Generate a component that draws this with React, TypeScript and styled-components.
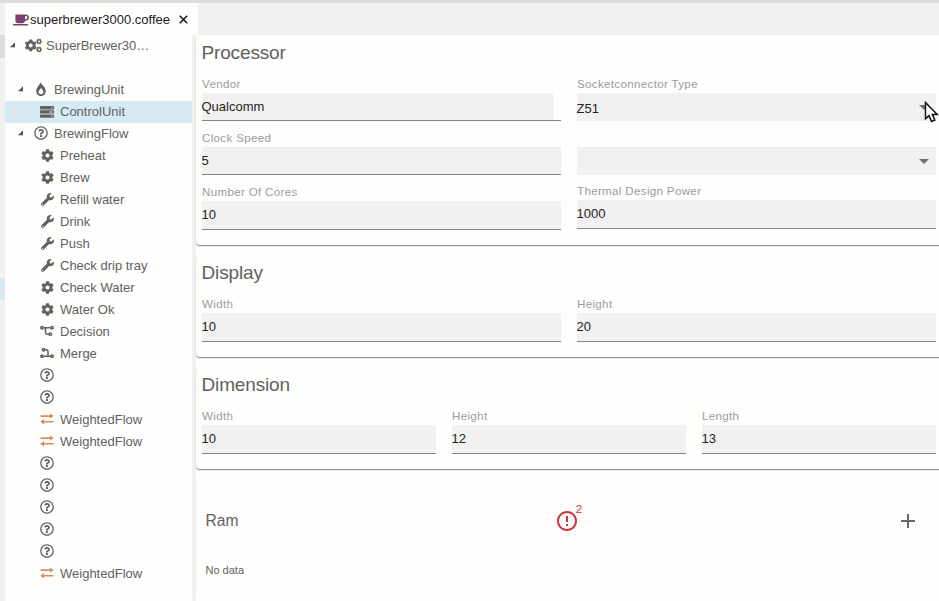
import React from "react";
import styled, { createGlobalStyle } from "styled-components";
import { FaCoffee, FaCogs, FaCog, FaWrench, FaRegQuestionCircle } from "react-icons/fa";
import { MdAdd, MdArrowDropDown, MdErrorOutline } from "react-icons/md";

const paper = "#fefefd";
const chrome = "#f1f1f0";
const ink = "#616161";

const GlobalStyle = createGlobalStyle`
  * { box-sizing: border-box; }
  body { margin: 0; background: ${paper}; overflow: hidden; }
  body, input { font-family: "Liberation Sans", Arial, sans-serif; }
`;

const Window = styled.div`
  position: relative;
  display: flex;
  flex-direction: column;
  width: 939px;
  height: 601px;
  overflow: hidden;
  background: ${paper};
  border-top: 3px solid #dcdcdc;
`;

const TabBar = styled.header`
  display: flex;
  flex: 0 0 32px;
  padding-left: 5px;
  background: ${chrome};
`;

const Tab = styled.div`
  display: flex;
  align-items: center;
  width: 193px;
  padding: 1px 8px 0 8px;
  background: ${paper};
  color: #1c1c1c;
  font-size: 13px;
  svg { flex: none; }
`;

const TabTitle = styled.span`
  margin: 0 9px 0 1px;
  white-space: nowrap;
`;

const Workspace = styled.div`
  display: flex;
  flex: 1;
  min-height: 0;
`;

const SideStrip = styled.div`
  width: 5px;
  background: ${chrome};
`;

const StripMark = styled.div<{ $top: number; $height: number; $color: string }>`
  height: ${(p) => p.$height}px;
  margin-top: ${(p) => p.$top}px;
  background: ${(p) => p.$color};
`;

const Tree = styled.nav`
  width: 187px;
  background: ${paper};
`;

const TreeRow = styled.div<{ $depth: number; $selected?: boolean }>`
  display: flex;
  align-items: center;
  height: 22px;
  padding-bottom: 2px;
  padding-left: ${(p) => [5, 13, 34][p.$depth]}px;
  background: ${(p) => (p.$selected ? "#d8eaf4" : "transparent")};
  color: ${ink};
  font-size: 13px;
  white-space: nowrap;
`;

const RootRow = styled(TreeRow)`
  margin-bottom: 22px;
`;

const Toggle = styled.svg`
  width: 6px;
  height: 6px;
  margin-right: 9px;
  flex: none;
  fill: #555;
`;

const IconSlot = styled.span<{ $wide?: boolean }>`
  display: flex;
  align-items: center;
  justify-content: center;
  width: ${(p) => (p.$wide ? 17 : 16)}px;
  margin-right: ${(p) => (p.$wide ? 4 : 5)}px;
  flex: none;
`;

const Splitter = styled.div`
  width: 4px;
  background: ${chrome};
`;

const Form = styled.main`
  display: flex;
  flex: 1;
  flex-direction: column;
  gap: 9px;
  min-width: 0;
`;

const Card = styled.section<{ $height: number; $top?: number; $soft?: boolean }>`
  flex: 0 0 ${(p) => p.$height}px;
  margin-right: -6px;
  padding: ${(p) => p.$top ?? 7}px 9px 0 6px;
  border-radius: 4px;
  background: ${paper};
  box-shadow: ${(p) =>
    p.$soft
      ? "0 0 1px rgba(0,0,0,.2)"
      : "0 1px 1px rgba(0,0,0,.4), 0 0 1px rgba(0,0,0,.08), 0 2px 2px -1px rgba(0,0,0,.12)"};
`;

const CardTitle = styled.h2`
  margin: 0 0 15px -0.5px;
  color: ${ink};
  font-size: 19px;
  font-weight: 400;
  letter-spacing: -0.15px;
  line-height: 24px;
`;

const Columns = styled.div`
  display: flex;
  gap: 16px;
`;

const Column = styled.div`
  display: flex;
  flex: 1;
  flex-direction: column;
`;

const FieldBox = styled.label<{ $height?: number }>`
  display: flex;
  flex-direction: column;
  height: ${(p) => p.$height ?? 54}px;
`;

const FieldLabel = styled.span`
  height: 13px;
  color: #9c9c9c;
  font-size: 11.6px;
  letter-spacing: 0.32px;
  line-height: 7px;
  white-space: nowrap;
`;

const Control = styled.span<{ $height: number; $plain?: boolean; $inset?: boolean }>`
  display: flex;
  align-items: center;
  justify-content: space-between;
  height: ${(p) => p.$height}px;
  padding-bottom: ${(p) => (p.$height > 28 ? 2 : 0)}px;
  border-bottom: ${(p) => (p.$plain ? "0" : "1px solid #868686")};
  background: ${(p) =>
    p.$inset ? `linear-gradient(90deg, ${chrome} calc(100% - 8px), ${paper} calc(100% - 8px))` : chrome};
  color: #242424;
  font-size: 13px;
  svg { color: #707070; flex: none; }
`;

const Value = styled.span<{ $lowered?: boolean }>`
  margin-left: -0.5px;
  padding-top: ${(p) => (p.$lowered ? 2 : 0)}px;
`;

const ListHeader = styled.div`
  display: grid;
  grid-template-columns: 1fr 28px 1fr;
  align-items: center;
  height: 76px;
  padding: 0 10px 0 3.5px;
  color: ${ink};
  font-size: 15.6px;
`;

const ErrorBadge = styled.div`
  position: relative;
  display: flex;
  left: 3px;
  color: #cf3438;
`;

const ErrorCount = styled.span`
  position: absolute;
  left: 21px;
  top: -6px;
  font-size: 11.5px;
  line-height: 12px;
`;

const AddSlot = styled.div`
  display: flex;
  justify-content: flex-end;
  padding-right: 6px;
  color: #686868;
`;

const Empty = styled.p`
  margin: 4px 0 0 3.5px;
  color: ${ink};
  font-size: 11px;
  line-height: 14px;
`;

const Pointer = styled.svg`
  position: absolute;
  left: 924px;
  top: 98px;
`;

const FlameIcon = () => (
  <svg width="12" height="14" viewBox="0 0 12 14">
    <path
      fill="currentColor"
      fillRule="evenodd"
      d="M5.4 0C6.1 2.7 10.7 5 10.7 8.9 10.7 11.8 8.7 14 6 14S1.2 11.8 1.2 8.9C1.2 6.8 2.3 5.3 3.3 3.9 4.4 2.4 5.4 1.6 5.4 0ZM6 6C5.2 7.6 3.6 8.5 3.6 10.1 3.6 11.5 4.6 12.3 6 12.3S8.4 11.5 8.4 10.1C8.4 8.5 6.8 7.6 6 6Z"
    />
  </svg>
);

const ServerIcon = () => (
  <svg width="14" height="13" viewBox="0 0 14 13">
    <path
      fill="currentColor"
      fillRule="evenodd"
      d="M.7 1H13.3Q14 1 14 1.7V3.8Q14 4.5 13.3 4.5H.7Q0 4.5 0 3.8V1.7Q0 1 .7 1ZM11 2.2V3.2H12.5V2.2ZM.7 5.2H13.3Q14 5.2 14 5.9V7.9Q14 8.6 13.3 8.6H.7Q0 8.6 0 7.9V5.9Q0 5.2 .7 5.2ZM9.5 6.4V7.4H12.5V6.4ZM.7 9.4H13.3Q14 9.4 14 10.1V12.1Q14 12.8 13.3 12.8H.7Q0 12.8 0 12.1V10.1Q0 9.4 .7 9.4ZM11 10.6V11.6H12.5V10.6Z"
    />
  </svg>
);

const DecisionIcon = () => (
  <svg width="14" height="12" viewBox="0 0 14 12" fill="none" stroke="currentColor" strokeWidth="1.5">
    <circle cx="2" cy="2.8" r="1.2" />
    <circle cx="12" cy="2.8" r="1.2" />
    <circle cx="10.3" cy="9.3" r="1.3" />
    <path d="M3.2 2.8H10.8M5.5 2.8V7Q5.5 9.3 7.5 9.3H9" />
  </svg>
);

const MergeIcon = () => (
  <svg width="14" height="12" viewBox="0 0 14 12" fill="none" stroke="currentColor" strokeWidth="1.5">
    <circle cx="3.5" cy="2.8" r="1.2" />
    <circle cx="2" cy="9.2" r="1.2" />
    <circle cx="12" cy="9.2" r="1.2" />
    <path d="M3.2 9.2H10.8M4.7 2.8H6.2Q8 2.8 8 4.8V9" />
  </svg>
);

const FlowIcon = () => (
  <svg width="14" height="12" viewBox="0 0 14 12" fill="#d3905f">
    <path d="M0.5 2.3H10V0.4L13.7 3.1 10 5.8V4H0.5ZM13.5 7.9H4V6L0.3 8.7 4 11.4V9.6H13.5Z" />
  </svg>
);

const icons = {
  system: <FaCogs size={17} />,
  flame: <FlameIcon />,
  server: <ServerIcon />,
  help: <FaRegQuestionCircle size={14} />,
  cog: <FaCog size={13} />,
  wrench: <FaWrench size={13} />,
  decision: <DecisionIcon />,
  merge: <MergeIcon />,
  flow: <FlowIcon />,
};

type Node = { icon: keyof typeof icons; name?: string; depth: number; selected?: boolean };

const nodes: Node[] = [
  { icon: "flame", name: "BrewingUnit", depth: 1 },
  { icon: "server", name: "ControlUnit", depth: 2, selected: true },
  { icon: "help", name: "BrewingFlow", depth: 1 },
  { icon: "cog", name: "Preheat", depth: 2 },
  { icon: "cog", name: "Brew", depth: 2 },
  { icon: "wrench", name: "Refill water", depth: 2 },
  { icon: "wrench", name: "Drink", depth: 2 },
  { icon: "wrench", name: "Push", depth: 2 },
  { icon: "wrench", name: "Check drip tray", depth: 2 },
  { icon: "cog", name: "Check Water", depth: 2 },
  { icon: "cog", name: "Water Ok", depth: 2 },
  { icon: "decision", name: "Decision", depth: 2 },
  { icon: "merge", name: "Merge", depth: 2 },
  { icon: "help", depth: 2 },
  { icon: "help", depth: 2 },
  { icon: "flow", name: "WeightedFlow", depth: 2 },
  { icon: "flow", name: "WeightedFlow", depth: 2 },
  { icon: "help", depth: 2 },
  { icon: "help", depth: 2 },
  { icon: "help", depth: 2 },
  { icon: "help", depth: 2 },
  { icon: "help", depth: 2 },
  { icon: "flow", name: "WeightedFlow", depth: 2 },
];

const Expander = () => (
  <Toggle viewBox="0 0 6 6">
    <path d="M5 0.3V5.3H0Z" />
  </Toggle>
);

type FieldProps = {
  label?: string;
  value?: string;
  height?: number;
  control?: number;
  select?: boolean;
  inset?: boolean;
};

const Field = ({ label, value, height, control = 29, select, inset }: FieldProps) => (
  <FieldBox $height={height}>
    <FieldLabel>{label}</FieldLabel>
    <Control $height={control} $plain={select} $inset={inset}>
      <Value $lowered={select}>{value}</Value>
      {select && <MdArrowDropDown size={24} />}
    </Control>
  </FieldBox>
);

export default function App() {
  return (
    <>
      <GlobalStyle />
      <Window>
        <TabBar>
          <Tab>
            <FaCoffee size={16} color="#78416f" />
            <TabTitle>superbrewer3000.coffee</TabTitle>
            <svg width="9" height="9" viewBox="0 0 9 9" stroke="#111" strokeWidth="1.5">
              <path d="M0.8 0.8L8.2 8.2M8.2 0.8L0.8 8.2" />
            </svg>
          </Tab>
        </TabBar>
        <Workspace>
          <SideStrip>
            <StripMark $top={0} $height={23} $color="#dcdcdc" />
            <StripMark $top={220} $height={22} $color="#d8eaf4" />
          </SideStrip>
          <Tree>
            <RootRow $depth={0}>
              <Expander />
              <IconSlot $wide>{icons.system}</IconSlot>
              SuperBrewer30…
            </RootRow>
            {nodes.map((n, i) => (
              <TreeRow key={i} $depth={n.depth} $selected={n.selected}>
                {n.depth === 1 && <Expander />}
                <IconSlot>{icons[n.icon]}</IconSlot>
                {n.name}
              </TreeRow>
            ))}
          </Tree>
          <Splitter />
          <Form>
            <Card $height={210} $top={6}>
              <CardTitle>Processor</CardTitle>
              <Columns>
                <Column>
                  <Field label="Vendor" value="Qualcomm" control={28} inset />
                  <Field label="Clock Speed" value="5" control={28} />
                  <Field label="Number Of Cores" value="10" />
                </Column>
                <Column>
                  <Field label="Socketconnector Type" value="Z51" control={28} select />
                  <Field control={28} height={53} select />
                  <Field label="Thermal Design Power" value="1000" />
                </Column>
              </Columns>
            </Card>
            <Card $height={103}>
              <CardTitle>Display</CardTitle>
              <Columns>
                <Column><Field label="Width" value="10" /></Column>
                <Column><Field label="Height" value="20" /></Column>
              </Columns>
            </Card>
            <Card $height={103}>
              <CardTitle>Dimension</CardTitle>
              <Columns>
                <Column><Field label="Width" value="10" /></Column>
                <Column><Field label="Height" value="12" /></Column>
                <Column><Field label="Length" value="13" /></Column>
              </Columns>
            </Card>
            <Card $height={119} $top={5} $soft>
              <ListHeader>
                <span>Ram</span>
                <ErrorBadge>
                  <MdErrorOutline size={24} />
                  <ErrorCount>2</ErrorCount>
                </ErrorBadge>
                <AddSlot><MdAdd size={24} /></AddSlot>
              </ListHeader>
              <Empty>No data</Empty>
            </Card>
          </Form>
        </Workspace>
        <Pointer width="15" height="22" viewBox="0 0 15 22">
          <path
            d="M1.5 1.5V17.8L5 14.6 7.6 20.4 10.8 19 8.3 13.4H13.2Z"
            fill="#fff"
            stroke="#111"
            strokeWidth="1.5"
          />
        </Pointer>
      </Window>
    </>
  );
}
